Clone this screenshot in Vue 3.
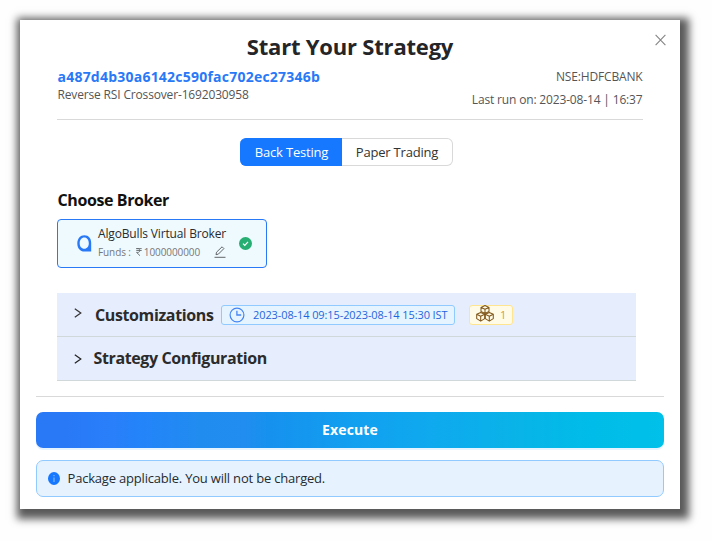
<script setup>
import { ref } from 'vue'

const mode = ref('Back Testing')
const modes = ['Back Testing', 'Paper Trading']
</script>

<template>
  <main class="dialog">
    <button class="close" aria-label="Close">
      <svg width="11" height="12" viewBox="0 0 11 12"><path d="M.6.8 10.4 11.2M10.4.8.6 11.2" fill="none" stroke="#858585" stroke-width="1.1" /></svg>
    </button>
    <h1><span>Start Your Strategy</span></h1>

    <header class="summary">
      <div class="identity">
        <strong>a487d4b30a6142c590fac702ec27346b</strong>
        <span>Reverse RSI Crossover-1692030958</span>
      </div>
      <div class="run">
        <span>NSE:HDFCBANK</span>
        <span class="last">Last run on: 2023-08-14 | 16:37</span>
      </div>
    </header>

    <div class="tabs">
      <button v-for="m in modes" :key="m" :class="{ active: m === mode }" @click="mode = m">{{ m }}</button>
    </div>

    <section class="broker">
      <h2>Choose Broker</h2>
      <div class="card">
        <svg class="logo" width="15" height="17" viewBox="0 0 15 17">
          <path fill="#2979f7" fill-rule="evenodd" d="M7.400.300C11.700.300 14.200 3.500 14.200 7.900v8.700H7.500C3.200 16.600.3 13.200.3 8.500.3 3.800 3.200.300 7.400.300Zm-.1 2.200C4.500 2.500 2.700 5 2.700 8.200s1.800 5.500 4.600 5.500 4.500-2.300 4.500-5.500-1.700-5.700-4.500-5.700Z" />
        </svg>
        <div class="details">
          <div class="name">AlgoBulls Virtual Broker</div>
          <div class="funds">
            <span class="label">Funds :</span>
            <svg class="rupee" width="6" height="8" viewBox="0 0 6 8"><path d="M.3.600h5.400M.300 2.500h5.400M.3.600h1.600c2.500 0 2.500 3.800 0 3.800H.500L4 7.700" fill="none" stroke="#666b6d" stroke-width=".9" /></svg>
            <span class="amount">1000000000</span>
            <svg class="edit" width="12" height="12" viewBox="0 0 12 12"><path d="M.5 11.300h11M2 8.700l.500-2.500L8.100.800l1.800 1.800-5.500 5.500L2 8.700Z" fill="none" stroke="#626668" stroke-width="1" /></svg>
          </div>
        </div>
        <svg class="check" width="13" height="13" viewBox="0 0 13 13"><circle cx="6.500" cy="6.500" r="6.500" fill="#27ae72" /><path d="m4 6.600 1.800 1.800L9 4.900" fill="none" stroke="#fff" stroke-width="1.200" /></svg>
      </div>
    </section>

    <section class="panels">
      <div class="panel">
        <svg class="chevron first" width="8" height="10" viewBox="0 0 8 10"><path d="m.8.800 6 4.200-6 4.200" fill="none" stroke="#333" stroke-width="1.200" /></svg>
        <h3 class="custom">Customizations</h3>
        <div class="period">
          <svg width="16" height="16" viewBox="0 0 16 16"><circle cx="8" cy="8" r="6.900" fill="none" stroke="#4585f3" stroke-width="1.200" /><path d="M7.900 3.700V8h4.300" fill="none" stroke="#4585f3" stroke-width="1.300" /></svg>
          <span>2023-08-14 09:15-2023-08-14 15:30 IST</span>
        </div>
        <div class="count">
          <svg width="18" height="17" viewBox="0 0 18 17">
            <g fill="none" stroke="#80571b" stroke-width="1.050" stroke-linejoin="round">
              <path d="m9 .6 4 1.800v4.200L9 8.400 5 6.600V2.400L9 .6ZM5 2.400l4 1.800 4-1.800M9 4.200v4.200" />
              <path d="m4.700 7.500 4 1.800v4.300l-4 2.500-4-2.500V9.300l4-1.800ZM.7 9.300l4 2 4-2M4.700 11.300v4.800" />
              <path d="m13.300 7.500 4 1.800v4.300l-4 2.500-4-2.500V9.300l4-1.800ZM9.300 9.300l4 2 4-2M13.300 11.300v4.800" />
            </g>
          </svg>
          <span>1</span>
        </div>
      </div>
      <div class="panel">
        <svg class="chevron" width="8" height="10" viewBox="0 0 8 10"><path d="m.8.800 6 4.200-6 4.200" fill="none" stroke="#222" stroke-width="1.200" /></svg>
        <h3 class="config">Strategy Configuration</h3>
      </div>
    </section>

    <footer>
      <button class="execute">Execute</button>
      <div class="notice">
        <svg width="12" height="13" viewBox="0 0 12 13"><ellipse cx="6" cy="6.500" rx="6" ry="6.500" fill="#1677ff" /><path d="M6 3v1.200M6 5.500V10" stroke="#7fb5ff" stroke-width="1.200" /></svg>
        <span>Package applicable. You will not be charged.</span>
      </div>
    </footer>
  </main>
</template>

<style>
body { background: #fefefe; }
</style>

<style scoped>
* { box-sizing: border-box; }
.dialog {
  position: relative;
  display: flex;
  flex-direction: column;
  width: 660px;
  height: 489px;
  margin: 20px;
  padding: 0 16px;
  background: #fff;
  box-shadow: 3px 4px 8px 6px #5a5a5a;
  color: #2b2b2b;
  font-family: "Open Sans", "Noto Sans", sans-serif;
  font-size: 12px;
}
button { font: inherit; border: 0; padding: 0; cursor: pointer; }
h1, h2, h3 { margin: 0; white-space: nowrap; }
span, strong, .name { white-space: nowrap; }
svg { display: block; flex: none; }
.close { position: absolute; top: 14px; right: 14px; background: none; }
h1 { height: 48px; padding-top: 10px; text-align: center; font-size: 22px; line-height: 32px; letter-spacing: -.2px; color: #252528; }
.summary { display: flex; justify-content: space-between; height: 52px; margin: 0 21px; border-bottom: 1px solid #d9d9d9; color: #555; }
.identity, .run { display: flex; flex-direction: column; }
.identity { padding-left: .5px; }
.identity strong { font-size: 14px; line-height: 18px; letter-spacing: .225px; color: #2979f7; }
.identity span { line-height: 17px; letter-spacing: -.16px; }
.run { align-items: flex-end; line-height: 18px; letter-spacing: -.16px; }
.run .last { margin-top: 5px; }
.run span { margin-right: .5px; }
.tabs { display: flex; align-self: center; width: 213px; height: 28px; margin: 18px 0 0 -7px; }
.tabs button { width: 111px; border: 1px solid #d9d9d9; border-left: 0; border-radius: 0 6px 6px 0; background: #fff; color: #333; font-size: 13px; letter-spacing: -.2px; }
.tabs button.active { width: 102px; padding-left: 2px; border-color: #1677ff; border-radius: 6px 0 0 6px; background: #1677ff; color: #fff; }
.broker { margin: 24px 21px 0; }
h2 { padding-left: .5px; font-size: 16px; line-height: 20px; letter-spacing: -.4px; color: #111; }
.card { display: flex; align-items: center; width: 210px; height: 49px; margin-top: 9px; padding-left: 18.5px; border: 1px solid #2979f7; border-radius: 4px; background: #effaff; }
.details { width: 128px; margin: -2px 0 0 6.5px; }
.name { font-size: 12px; line-height: 18px; letter-spacing: -.15px; }
.funds { display: flex; align-items: center; height: 18px; color: #777; font-size: 10px; letter-spacing: -.1px; }
.rupee { margin-left: 5px; }
.amount { margin-left: 2px; }
.edit { margin-left: auto; }
.check { margin: -1px 0 0 13px; }
.panels { width: 579px; margin: 25px 0 0 21px; }
.panel { display: flex; align-items: center; height: 44px; padding-left: 17px; border-bottom: 1px solid #d0d8da; background: #e6edfd; }
.chevron.first { margin-bottom: 3px; }
h3 { font-size: 16px; line-height: 24px; letter-spacing: -.38px; }
.custom { width: 119px; margin-left: 13px; }
.config { margin: -2px 0 0 11.5px; }
.period { display: flex; align-items: center; width: 234px; height: 20px; margin-left: 7px; padding-left: 7px; border: 1px solid #91caff; border-radius: 3px; background: #e6f4ff; color: #1f65dc; font-size: 11px; letter-spacing: -.1px; }
.period span { margin-left: 8px; }
.count { display: flex; align-items: center; width: 44px; height: 20px; margin-left: 14px; padding-left: 6px; border: 1px solid #ffe58f; border-radius: 3px; background: #fffbe6; color: #d59b45; font-size: 11px; }
.count svg { margin-bottom: 2px; }
.count span { margin-left: 6px; }
footer { margin-top: 15px; padding-top: 15px; border-top: 1px solid #d9d9d9; }
.execute { display: block; width: 100%; height: 36px; padding-bottom: 2px; border-radius: 7px; background: linear-gradient(90deg, #2979f7 0%, #2979f7 5%, #297ff9 12%, #2384f9 17%, #218cf0 26%, #218df0 33%, #1691ee 37%, #129ff0 50%, #0eaaee 64%, #09b3e8 76%, #00bce8 88%, #00c1e9 100%); box-shadow: 0 2px 0 rgba(5, 145, 255, .1); color: #fff; font-size: 14px; font-weight: 700; letter-spacing: .15px; }
.notice { display: flex; align-items: center; height: 37px; margin-top: 12px; padding-left: 11px; border: 1px solid #91caff; border-radius: 7px; background: #e6f3ff; font-size: 13px; letter-spacing: -.195px; color: #252b31; }
.notice span { margin: -2px 0 0 7.5px; }
</style>
